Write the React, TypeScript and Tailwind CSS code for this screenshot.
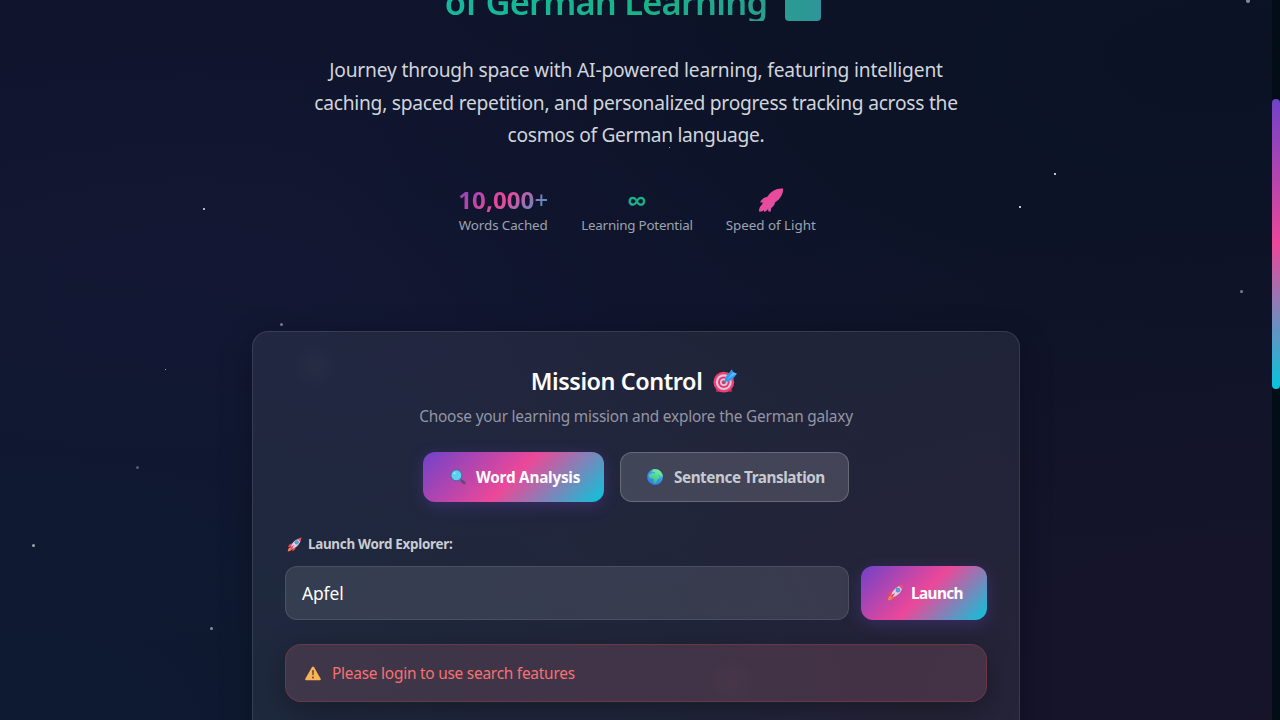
import type { ReactNode } from "react";

type IconProps = { className?: string };

function RocketIcon({ className }: IconProps) {
  return (
    <svg viewBox="0 0 16 16" className={className} aria-hidden="true">
      <path d="M5.2 6.6 2.6 7.6 1 10.6l3.6-.3zM9.4 10.8 8.6 13.4 5.6 15.2l.2-3.8z" fill="#f8405f" />
      <path d="M3.4 10.8C1.600 11.200.9 13.400.8 15.400c2-.1 4-.8 4.600-2.500z" fill="#f5803e" />
      <path d="M3.800 11.400C5 6 8.400 2.200 14.800 1.200 14.400 7.400 10.400 11 5 12.600z" fill="#d9cfe3" />
      <path d="M3.900 10.600 7.600 8.400 5.400 12.300 4.200 12.600z" fill="#f0366e" />
      <path d="M11.400 2.200 15.700.3 14 4.900z" fill="#f64a5e" />
      <circle cx="10.300" cy="5.700" r="2.200" fill="#7e7aa4" />
      <circle cx="10.300" cy="5.700" r="1.500" fill="#3fb0f0" />
    </svg>
  );
}

function RocketShape({ className }: IconProps) {
  return (
    <svg viewBox="0 0 26 25" className={className} aria-hidden="true">
      <defs>
        <linearGradient id="rocketFill" x1="0" y1="0" x2="1" y2="1">
          <stop offset="0" stopColor="#e8489c" />
          <stop offset=".5" stopColor="#ea4a9b" />
          <stop offset="1" stopColor="#b867b0" />
        </linearGradient>
      </defs>
      <path
        d="M25 .6C22.200.1 18.600.9 15.800 2.500c-2.600 1.500-5 3.900-6.800 6.600-3 .4-5.200 2-6.900 5.100l3 .5-1.500 2.200C1.900 18.500.9 20.700.9 23.400h2.800l2-1.100.5 1.600 2.700-1.400 1.100-1.500.4 2.600 2.300-.1.500-3.600c2.200-1.300 3.500-3 3.700-5.400 2.900-1.900 5.100-4.200 6.600-7.100C24.800 5 25.300 2.500 25 .6Z"
        fill="url(#rocketFill)"
      />
    </svg>
  );
}

function TargetIcon({ className }: IconProps) {
  return (
    <svg viewBox="0 0 24 24" className={className} aria-hidden="true">
      <path d="M4.200 19.500 2.600 22.200Q4 23.600 6 22.400L16 22.400Q18 23.600 19.400 22l-1.600-2.700z" fill="#b32a58" />
      <circle cx="10.800" cy="13.200" r="10.400" fill="#ee3f73" />
      <circle cx="10.800" cy="13.200" r="7.900" fill="#dcc7dc" />
      <circle cx="10.800" cy="13.200" r="5.800" fill="#e8386e" />
      <circle cx="10.800" cy="13.200" r="3.800" fill="#dcc7dc" />
      <circle cx="10.800" cy="13.200" r="2" fill="#c63a6c" />
      <path d="m10.800 13.200 6.500-6.400" stroke="#6f7c9c" strokeWidth="1.300" />
      <path d="m12 8.400 4.500-4.800L18.800.2l1.500 3L24 4.700l-3.200 4.100-4.600 3.800-4.200-.2z" fill="#2e9bf0" />
      <path d="m14.200 10.300 6-7.100 3.600 1.500-3.400 1.700z" fill="#5cbcf8" />
    </svg>
  );
}

function SearchIcon({ className }: IconProps) {
  return (
    <svg viewBox="0 0 16 16" className={className} aria-hidden="true">
      <path d="m10 10 2 2" stroke="#6e5a96" strokeWidth="1.600" />
      <path d="m12 12 2.200 2" stroke="#654a78" strokeWidth="3" strokeLinecap="round" />
      <circle cx="6.400" cy="6.300" r="5.500" fill="#5ad1ee" stroke="#44689c" strokeWidth="1" />
      <circle cx="4.600" cy="4.300" r="1" fill="#a5ebf8" />
    </svg>
  );
}

function GlobeIcon({ className }: IconProps) {
  return (
    <svg viewBox="0 0 16 16" className={className} aria-hidden="true">
      <defs>
        <linearGradient id="sea" x1=".8" y1="0" x2=".2" y2="1">
          <stop offset="0" stopColor="#38b6f5" />
          <stop offset="1" stopColor="#3377e2" />
        </linearGradient>
        <linearGradient id="land" x1=".7" y1="0" x2=".3" y2="1">
          <stop offset="0" stopColor="#77f3a0" />
          <stop offset="1" stopColor="#35b886" />
        </linearGradient>
      </defs>
      <circle cx="8" cy="8" r="7.900" fill="url(#sea)" />
      <path
        d="M6 .5C8.500-.2 11.800.4 13.500 2.400c1.500 1.400 2.300 3.400 2.300 5.200l-1-.4-.8 2-1.400-2.600-1.600-.5 1.500 2-.3 1.300-1.500.6-1.300 3.200-1.800 1.200-1-1.200.2-2.400L5.700 9.500l-2.500-.2L1.600 7.600l.8-2L5 4.200l2.500.4.800-1-2.500-.6-1.200.6z"
        fill="url(#land)"
      />
    </svg>
  );
}

function WarningIcon({ className }: IconProps) {
  return (
    <svg viewBox="0 0 16 15" className={className} aria-hidden="true">
      <path d="M7 .9Q8 0 9 .9l6.800 12.100Q16 14.300 14.800 14.300H1.200Q0 14.300.2 13z" fill="#fbb453" />
      <path d="M7.100 4.300h1.800l-.3 5H7.400z" fill="#5c4a48" />
      <circle cx="8" cy="11.500" r="1" fill="#5c4a48" />
    </svg>
  );
}

const stars = [
  "left-[203px] top-[208px] size-[2px] bg-white/90",
  "left-[280px] top-[323px] size-[3px] bg-white/45",
  "left-[1054px] top-[173px] size-[2px] bg-white",
  "left-[1019px] top-[206px] size-[2px] bg-white",
  "left-[1240px] top-[290px] size-[3px] bg-white/45",
  "left-[1246px] top-[-1px] size-[4px] bg-white/50",
  "left-[136px] top-[466px] size-[3px] bg-white/30",
  "left-[32px] top-[544px] size-[3px] bg-white/60",
  "left-[210px] top-[627px] size-[3px] bg-white/50",
  "left-[165px] top-[369px] size-px bg-white/80",
  "left-[669px] top-[147px] size-px bg-white/80",
];

function Stat({ value, label }: { value: ReactNode; label: ReactNode }) {
  return (
    <div className="flex flex-col items-center">
      <div className="flex h-8 items-center text-2xl font-bold">{value}</div>
      <div className="-mt-px text-[13.4px] leading-5 text-[#9ca3af]">{label}</div>
    </div>
  );
}

const nebula = "bg-[linear-gradient(135deg,#7042c8_0%,#ec4899_50%,#06c6dc_100%)]";

export default function App() {
  return (
    <div className="flex h-[720px] w-[1280px] overflow-hidden bg-[#020d18] font-['Noto_Sans','Open_Sans',sans-serif] text-white">
      <div className="relative h-[720px] w-[1272px] overflow-hidden bg-[#0f142b] bg-[radial-gradient(ellipse_at_0%_100%,rgba(13,29,52,0.75)_0%,transparent_48%),radial-gradient(ellipse_at_100%_100%,rgba(25,20,42,0.8)_0%,transparent_55%),radial-gradient(ellipse_at_95%_8%,rgba(9,18,35,0.9)_0%,transparent_55%),radial-gradient(ellipse_at_15%_40%,rgba(20,24,54,0.8)_0%,transparent_60%)]">
        {stars.map((star) => (
          <span key={star} className={`absolute rounded-full ${star}`} />
        ))}

        <div className="relative flex flex-col items-center">
          <div className="flex h-[21px] items-end justify-center gap-[18px] overflow-hidden pr-1.5">
            <h1 className="bg-[linear-gradient(90deg,#15b8a0_0%,#17b487_60%,#289f90_100%)] bg-clip-text text-[34.5px] leading-[38px] font-semibold tracking-[-0.82px] whitespace-nowrap text-transparent">
              of German Learning
            </h1>
            <span className="size-9 rounded-[4px] bg-[linear-gradient(90deg,#2a9c92,#2f9499)]" />
          </div>

          <p className="mt-[33px] text-center text-[19.2px] leading-[32.5px] whitespace-nowrap text-[#d1d5db]">
            <span className="block tracking-[-0.181px]">Journey through space with AI-powered learning, featuring intelligent</span>
            <span className="block tracking-[-0.245px]">caching, spaced repetition, and personalized progress tracking across the</span>
            <span className="block tracking-[-0.315px]">cosmos of German language.</span>
          </p>

          <div className="mt-8 flex gap-[33px] pl-0.5">
            <Stat
              value={
                <span className="bg-[linear-gradient(135deg,#7c45c4_0%,#ec4899_50%,#28a8d4_100%)] bg-clip-text tracking-[0.1px] text-transparent">10,000<span className="font-medium">+</span></span>
              }
              label={<span className="tracking-[-0.1px]">Words Cached</span>}
            />
            <Stat
              value={<span className="text-[28px] leading-8 font-semibold text-[#19b18a]">∞</span>}
              label={<span className="tracking-[-0.22px]">Learning Potential</span>}
            />
            <Stat
              value={<RocketShape className="mt-px h-[25px] w-[26px]" />}
              label={<span className="tracking-[-0.03px]">Speed of Light</span>}
            />
          </div>
        </div>

        <section className="relative mx-auto mt-24 h-[440px] w-[768px] rounded-2xl border border-white/10 bg-white/[0.07] bg-[radial-gradient(circle_at_62px_35px,rgba(255,255,255,0.02)_0,transparent_22px)] px-8 pt-8 shadow-[0_8px_32px_rgba(0,0,0,0.3)]">
          <h2 className="flex h-9 items-center justify-center text-[23.4px] font-semibold tracking-[-0.42px]">
            Mission Control
            <TargetIcon className="mr-1 ml-[11px] size-6 -translate-y-px" />
          </h2>
          <p className="mt-[5px] text-center text-[15.4px] leading-6 tracking-[-0.21px] text-[#9396a4]">
            Choose your learning mission and explore the German galaxy
          </p>

          <div className="mt-[23px] flex justify-center gap-4">
            <button className={`flex h-[50px] w-[181px] items-center rounded-xl pl-[27px] text-[15.3px] font-bold tracking-[-0.23px] shadow-[0_4px_15px_rgba(112,66,200,0.3)] ${nebula}`}>
              <SearchIcon className="mr-[10px] size-4" />
              <span className="pt-0.5">Word Analysis</span>
            </button>
            <button className="flex h-[50px] w-[229px] items-center rounded-xl border border-white/20 bg-white/15 pl-[26px] text-[15.3px] font-bold tracking-[-0.46px] text-[#c6cad1]">
              <GlobeIcon className="mr-[11px] size-4" />
              <span className="pt-0.5">Sentence Translation</span>
            </button>
          </div>

          <label className="mt-8 flex h-5 items-center pt-0.5 pl-0.5 text-[13.4px] font-bold tracking-[-0.28px] text-[#c9cdd4]">
            <RocketIcon className="mr-[6px] size-[15px]" />
            Launch Word Explorer:
          </label>
          <div className="mt-3 flex gap-3">
            <div className="flex h-[54px] w-[564px] items-center rounded-xl border border-white/10 bg-white/10 px-4 text-[17.4px]">
              <span className="pt-0.5 tracking-[-0.1px]">Apfel</span>
            </div>
            <button className={`flex h-[54px] w-[126px] items-center rounded-xl pl-[26px] text-[15.3px] font-bold tracking-[-0.58px] shadow-[0_4px_15px_rgba(112,66,200,0.3)] ${nebula}`}>
              <RocketIcon className="mr-[7px] size-[17px]" />
              <span className="pt-0.5">Launch</span>
            </button>
          </div>

          <div className="mt-6 flex h-[58px] items-center rounded-2xl border border-[#ef4444]/25 bg-[#e47a88]/[0.17] bg-[radial-gradient(circle_at_446px_36px,rgba(255,110,120,0.03)_0,transparent_24px)] pl-[19px] text-[15.4px] tracking-[-0.226px] text-[#f87171] shadow-[0_8px_32px_rgba(0,0,0,0.3)]">
            <WarningIcon className="mt-0.5 mr-[11px] h-[15px] w-4" />
            <span className="pt-0.5">Please login to use search features</span>
          </div>
        </section>
      </div>

      <div className="flex h-[720px] w-2 flex-col bg-[#020d18] pt-[99px]">
        <div className="h-[290px] rounded bg-[linear-gradient(180deg,#7042c8_0%,#ec4899_50%,#06c6dc_100%)]" />
      </div>
    </div>
  );
}
